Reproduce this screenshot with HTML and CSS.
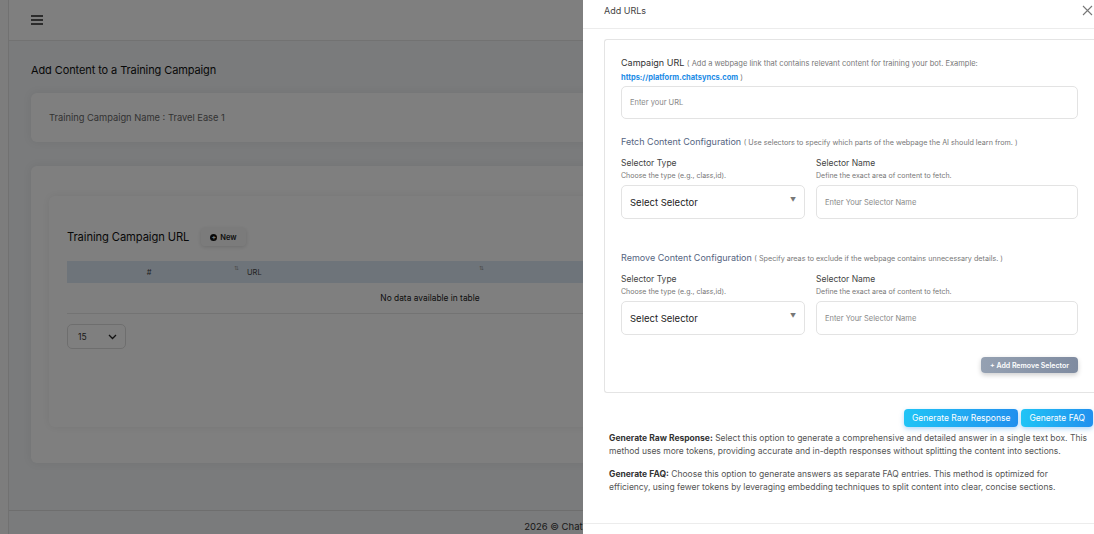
FILE: index.html
```html
<!DOCTYPE html>
<html>
<head>
    <title>Add Content to a Training Campaign</title>
    <link rel="stylesheet" href="styles.css">
</head>
<body>
<div class="layout">
    <div class="side"></div>
    <div class="main">
        <div class="topbar">
            <svg class="burger" width="12" height="10" viewBox="0 0 12 10"><path d="M0 1h12M0 5h12M0 9h12" stroke="#222" stroke-width="1.3"/></svg>
        </div>
        <div class="content">
            <h4 class="page-title">Add Content to a Training Campaign</h4>
            <div class="card name-card">Training Campaign Name : Travel Ease 1</div>
            <div class="card outer-card">
                <div class="card inner-card">
                    <div class="table-top">
                        <h3>Training Campaign URL</h3>
                        <button class="btn-new"><span class="plus">+</span> New</button>
                    </div>
                    <table class="url-table">
                        <thead>
                            <tr>
                                <th class="col-num">#<span class="sort">⇅</span></th>
                                <th class="col-url">URL<span class="sort">⇅</span></th>
                            </tr>
                        </thead>
                        <tbody>
                            <tr><td colspan="2" class="empty">No data available in table</td></tr>
                        </tbody>
                    </table>
                    <div class="page-len">15
                        <svg width="9" height="6" viewBox="0 0 9 6"><path d="M1 1l3.5 3.5L8 1" fill="none" stroke="#222" stroke-width="1.3"/></svg>
                    </div>
                </div>
            </div>
        </div>
        <footer class="footer">2026 © ChatSyncs.</footer>
    </div>
</div>

<div class="backdrop"></div>

<aside class="panel">
    <div class="panel-header">
        <span class="panel-title">Add URLs</span>
        <svg class="close" width="11" height="11" viewBox="0 0 11 11"><path d="M1 1l9 9M10 1l-9 9" stroke="#777" stroke-width="1.1"/></svg>
    </div>
    <div class="panel-body">
        <div class="form-card">
            <div class="field-label">Campaign URL <span class="hint">( Add a webpage link that contains relevant content for training your bot. Example: <a class="link">https://platform.chatsyncs.com</a> )</span></div>
            <div class="input url-input">Enter your URL</div>

            <div class="section-title">Fetch Content Configuration <span class="hint">( Use selectors to specify which parts of the webpage the AI should learn from. )</span></div>
            <div class="selector-row">
                <div>
                    <div class="sel-label">Selector Type</div>
                    <div class="sel-hint">Choose the type (e.g., class,id).</div>
                    <div class="input select">Select Selector<span class="caret">▼</span></div>
                </div>
                <div>
                    <div class="sel-label">Selector Name</div>
                    <div class="sel-hint">Define the exact area of content to fetch.</div>
                    <div class="input">Enter Your Selector Name</div>
                </div>
            </div>

            <div class="section-title remove-title">Remove Content Configuration <span class="hint">( Specify areas to exclude if the webpage contains unnecessary details. )</span></div>
            <div class="selector-row">
                <div>
                    <div class="sel-label">Selector Type</div>
                    <div class="sel-hint">Choose the type (e.g., class,id).</div>
                    <div class="input select">Select Selector<span class="caret">▼</span></div>
                </div>
                <div>
                    <div class="sel-label">Selector Name</div>
                    <div class="sel-hint">Define the exact area of content to fetch.</div>
                    <div class="input">Enter Your Selector Name</div>
                </div>
            </div>

            <div class="add-row">
                <button class="btn-add">+ Add Remove Selector</button>
            </div>
        </div>

        <div class="gen-row">
            <button class="btn-gen">Generate Raw Response</button>
            <button class="btn-gen">Generate FAQ</button>
        </div>

        <p class="desc"><b>Generate Raw Response:</b> Select this option to generate a comprehensive and detailed answer in a single text box. This method uses more tokens, providing accurate and in-depth responses without splitting the content into sections.</p>
        <p class="desc"><b>Generate FAQ:</b> Choose this option to generate answers as separate FAQ entries. This method is optimized for efficiency, using fewer tokens by leveraging embedding techniques to split content into clear, concise sections.</p>
    </div>
    <div class="panel-foot"></div>
</aside>
</body>
</html>
```

FILE: styles.css
```css
body {
    margin: 0;
    font-family: 'Inter', 'Noto Sans', sans-serif;
    background-color: #f4f6f8;
    color: #222;
    overflow: hidden;
}

.layout {
    display: flex;
    height: 100vh;
}

.side {
    width: 8px;
    border-right: 1px solid #e3e3e3;
    background-color: #fafafa;
}

.main {
    flex: 1;
    display: flex;
    flex-direction: column;
    min-width: 0;
}

.topbar {
    height: 40px;
    background-color: #fff;
    border-bottom: 1px solid #e4e4e4;
    display: flex;
    align-items: center;
    padding-left: 22px;
}

.content {
    flex: 1;
    padding: 21px 31px 0 22px;
}

.page-title {
    margin: 0;
    font-size: 11px;
    line-height: 16px;
    font-weight: 400;
    color: #111;
    letter-spacing: -0.1px;
}

.card {
    background-color: #fff;
    border-radius: 6px;
    box-shadow: 0px 0px 8px 1px rgba(0,0,0,0.06);
}

.name-card {
    margin-top: 15px;
    height: 49px;
    display: flex;
    align-items: center;
    padding-left: 18px;
    font-size: 9.3px;
    color: #666;
}

.outer-card {
    margin-top: 24px;
    padding: 30px 18px 36px 18px;
}

.inner-card {
    padding: 32px 18px 78px 18px;
}

.table-top {
    display: flex;
    align-items: center;
    height: 18px;
}

.table-top h3 {
    margin: 0;
    font-size: 11.2px;
    font-weight: 400;
    color: #111;
    letter-spacing: -0.1px;
}

.btn-new {
    margin-left: 12px;
    height: 18px;
    padding: 0 9px;
    border: none;
    border-radius: 4px;
    background-color: #f7f7f7;
    box-shadow: 0px 1px 4px rgba(0,0,0,0.15);
    font-family: inherit;
    font-size: 7.5px;
    font-weight: 600;
    color: #222;
    display: flex;
    align-items: center;
    gap: 3px;
}

.plus {
    width: 7px;
    height: 7px;
    border-radius: 50%;
    background-color: #111;
    color: #fff;
    font-size: 7px;
    line-height: 7px;
    text-align: center;
}

.url-table {
    margin-top: 15px;
    width: 726px;
    border-collapse: collapse;
    font-size: 7.5px;
}

.url-table th {
    height: 22px;
    background-color: #dde9f4;
    font-weight: 400;
    color: #444;
    padding: 0;
    position: relative;
}

.col-num {
    width: 164px;
    text-align: center;
}

.url-table .col-num {
    padding-right: 16px;
}

.col-url {
    text-align: left;
}

.sort {
    position: absolute;
    top: 3px;
    font-size: 6px;
    color: #999;
}

.col-num .sort {
    right: 8px;
}

.col-url .sort {
    left: 232px;
}

.empty {
    height: 28px;
    text-align: center;
    font-size: 8.4px;
    color: #222;
    border-bottom: 1px solid #e6e6e6;
}

.page-len {
    margin-top: 10px;
    width: 59px;
    height: 25px;
    box-sizing: border-box;
    border: 1px solid #ddd;
    border-radius: 5px;
    display: flex;
    align-items: center;
    justify-content: space-between;
    padding: 0 8px 0 10px;
    font-size: 8.5px;
    color: #333;
}

.footer {
    height: 23px;
    border-top: 1px solid #dcdcdc;
    text-align: center;
    font-size: 9.5px;
    line-height: 32px;
    color: #333;
    padding-left: 34px;
}

.backdrop {
    position: fixed;
    inset: 0;
    background-color: rgba(0,0,0,0.5);
}

.panel {
    position: fixed;
    top: 0;
    right: 0;
    width: 511px;
    height: 100vh;
    background-color: #fff;
    display: flex;
    flex-direction: column;
}

.panel-header {
    height: 29px;
    border-bottom: 1px solid #ececec;
    display: flex;
    justify-content: space-between;
    align-items: flex-start;
    padding: 4px 1px 0 21px;
    box-sizing: border-box;
}

.panel-title {
    font-size: 9px;
    line-height: 13px;
    color: #444;
}

.close {
    margin-top: 1px;
}

.panel-body {
    padding: 10px 0 0 21px;
}

.form-card {
    border: 1px solid #e4e4e4;
    border-right: none;
    border-radius: 3px 0 0 3px;
    padding: 16px 16px 19px 16px;
}

.field-label {
    font-size: 9px;
    line-height: 13px;
    color: #333;
}

.hint {
    font-size: 7.2px;
    color: #777;
}

.field-label .hint {
    font-size: 7.5px;
}

.link {
    color: #1a8be6;
    font-weight: 700;
    font-size: 7.5px;
}

.input {
    box-sizing: border-box;
    height: 34px;
    border: 1px solid #e3e3e3;
    border-radius: 5px;
    display: flex;
    align-items: center;
    padding-left: 8px;
    font-size: 7.5px;
    color: #888;
}

.url-input {
    margin-top: 2px;
    height: 33px;
}

.section-title {
    margin-top: 16px;
    font-size: 9px;
    line-height: 13px;
    color: #55657f;
}

.remove-title {
    margin-top: 32px;
}

.selector-row {
    display: grid;
    grid-template-columns: 184px 1fr;
    gap: 11px;
    margin-top: 8px;
}

.sel-label {
    font-size: 8.5px;
    line-height: 13px;
    color: #444;
}

.sel-hint {
    font-size: 7px;
    line-height: 12px;
    color: #777;
}

.select {
    justify-content: space-between;
    padding-right: 8px;
    font-size: 9.5px;
    color: #222;
}

.selector-row .input {
    margin-top: 3px;
}

.caret {
    font-size: 6px;
    color: #777;
    margin-top: -5px;
}

.add-row {
    display: flex;
    justify-content: flex-end;
    margin-top: 22px;
}

.btn-add {
    height: 16px;
    padding: 0 9px;
    border: none;
    border-radius: 4px;
    background: linear-gradient(90deg, #95a1b2, #7f8ba0);
    box-shadow: 0px 2px 5px rgba(0,0,0,0.2);
    color: #fff;
    font-family: inherit;
    font-size: 7px;
    font-weight: 600;
}

.gen-row {
    display: flex;
    justify-content: flex-end;
    gap: 3px;
    margin-top: 16px;
    padding-right: 1px;
}

.btn-gen {
    height: 18px;
    padding: 0 8px;
    border: none;
    border-radius: 4px;
    background: linear-gradient(90deg, #20c4f6, #2190ee);
    box-shadow: 0px 2px 5px rgba(33,144,238,0.35);
    color: #fff;
    font-family: inherit;
    font-size: 8.5px;
}

.desc {
    margin: 5px 5px 10px 5px;
    font-size: 8.5px;
    line-height: 13px;
    color: #555;
}

.desc b {
    color: #333;
    font-weight: 700;
}

.panel-foot {
    margin-top: auto;
    margin-bottom: 10px;
    border-top: 1px solid #ececec;
}
```
